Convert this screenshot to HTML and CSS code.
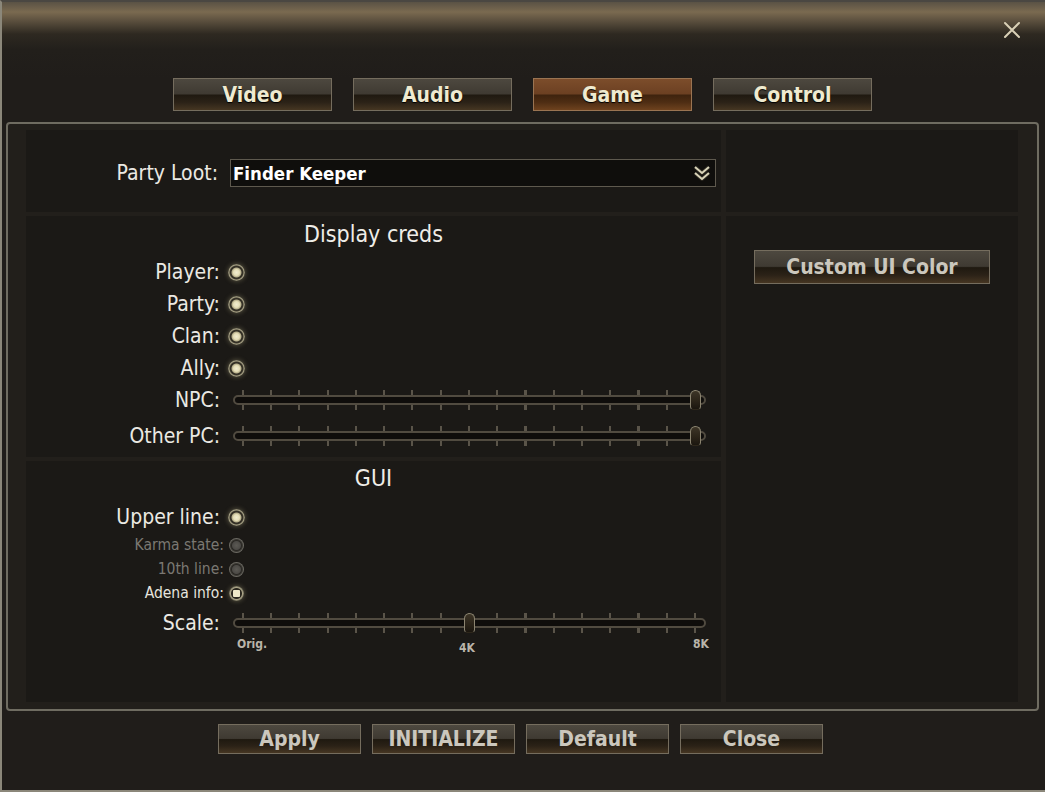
FILE: index.html
```html
<!DOCTYPE html>
<html lang="en">
<head>
    <meta charset="UTF-8">
    <title>Options - Game</title>
    <link rel="stylesheet" href="styles.css">
</head>
<body>
    <div class="window">
        <div class="title-bar">
            <button class="close-btn" aria-label="Close">
                <svg width="18" height="18" viewBox="0 0 18 18"><path d="M2 2 L16 16 M16 2 L2 16" stroke="#d9d0b6" stroke-width="2" stroke-linecap="round"/></svg>
            </button>
        </div>

        <div class="tabs">
            <div class="btn tab">Video</div>
            <div class="btn tab">Audio</div>
            <div class="btn tab active">Game</div>
            <div class="btn tab">Control</div>
        </div>

        <div class="panel">
            <div class="cell loot-cell">
                <span class="label loot-label">Party Loot:</span>
                <div class="dropdown">
                    <span>Finder Keeper</span>
                    <svg class="chevron" width="18" height="18" viewBox="0 0 18 18">
                        <path d="M2 3 L9 9 L16 3 M2 9 L9 15 L16 9" fill="none" stroke="#2a2720" stroke-width="4" stroke-linejoin="round"/>
                        <path d="M2 3 L9 9 L16 3 M2 9 L9 15 L16 9" fill="none" stroke="#d8d3b8" stroke-width="2" stroke-linejoin="round"/>
                    </svg>
                </div>
            </div>
            <div class="cell"></div>

            <div class="cell creds-cell">
                <div class="section-title">Display creds</div>
                <div class="row"><span class="label">Player:</span><span class="radio"></span></div>
                <div class="row"><span class="label">Party:</span><span class="radio"></span></div>
                <div class="row"><span class="label">Clan:</span><span class="radio"></span></div>
                <div class="row"><span class="label">Ally:</span><span class="radio"></span></div>
                <div class="row"><span class="label">NPC:</span>
                    <div class="slider"><div class="ticks"></div><div class="track"></div><div class="thumb" style="left: 457px"></div></div>
                </div>
                <div class="row row-gap"><span class="label">Other PC:</span>
                    <div class="slider"><div class="ticks"></div><div class="track"></div><div class="thumb" style="left: 457px"></div></div>
                </div>
            </div>

            <div class="cell side-cell">
                <div class="btn wide-btn">Custom UI Color</div>
            </div>

            <div class="cell gui-cell">
                <div class="section-title gui-title">GUI</div>
                <div class="row"><span class="label">Upper line:</span><span class="radio"></span></div>
                <div class="row small"><span class="label dim">Karma state:</span><span class="radio off"></span></div>
                <div class="row small"><span class="label dim">10th line:</span><span class="radio off"></span></div>
                <div class="row small"><span class="label">Adena info:</span><span class="radio square"></span></div>
                <div class="row scale-row"><span class="label">Scale:</span>
                    <div class="slider"><div class="ticks"></div><div class="track"></div><div class="thumb" style="left: 231px"></div></div>
                </div>
                <div class="scale-marks">
                    <span>Orig.</span>
                    <span class="mid">4K</span>
                    <span class="end">8K</span>
                </div>
            </div>
        </div>

        <div class="footer">
            <div class="btn foot-btn">Apply</div>
            <div class="btn foot-btn">INITIALIZE</div>
            <div class="btn foot-btn">Default</div>
            <div class="btn foot-btn">Close</div>
        </div>
    </div>
</body>
</html>
```

FILE: styles.css
```css
* { margin: 0; padding: 0; box-sizing: border-box; }

body {
    background: #1f1c19;
    font-family: 'DejaVu Sans Condensed', 'DejaVu Sans', sans-serif;
    color: #e8e6e0;
}

.window {
    width: 1045px;
    height: 792px;
    background: #201d1a;
    border-left: 2px solid #8b877a;
    border-bottom: 2px solid #8b877a;
    border-top: 2px solid #4a4742;
    position: relative;
}

/* top strip */
.title-bar {
    height: 76px;
    background: linear-gradient(180deg, #5a5245 0px, #7a6a50 10px, #5e5240 18px, #2e2921 32px, #221f1b 48px, #201d1a 76px);
    position: relative;
}

.close-btn {
    position: absolute;
    right: 24px;
    top: 19px;
    background: none;
    border: none;
    width: 18px;
    height: 18px;
}

.tabs {
    display: flex;
    justify-content: center;
    gap: 21px;
    margin-left: -2px;
}

.btn {
    display: flex;
    align-items: center;
    justify-content: center;
    border: 1px solid #756d5e;
    background: linear-gradient(180deg, #4d483f 0%, #3f3a32 48%, #1f1910 52%, #2b2217 75%, #463622 100%);
    font-weight: bold;
    font-size: 21px;
    color: #cbc7bd;
}

.tab {
    width: 159px;
    height: 33px;
    color: #efead0;
    text-shadow: 0 1px 1px #000;
}

.tab.active {
    background: linear-gradient(180deg, #7c4d2b 0%, #6c4022 48%, #3e230e 52%, #4e2d13 75%, #6e421e 100%);
    border-color: #9a7452;
}

.panel {
    margin: 11px 0 0 4px;
    width: 1033px;
    height: 589px;
    border: 2px solid #6f6c61;
    border-radius: 4px;
    background: #221f1b;
    padding: 6px 18px;
    display: grid;
    grid-template-columns: 695px 292px;
    grid-template-rows: 82px 241px 241px;
    gap: 4px 5px;
}

.cell {
    background: #1b1916;
}

.side-cell {
    grid-column: 2;
    grid-row: 2 / 4;
    padding: 34px 0 0 28px;
}

.wide-btn {
    width: 236px;
    height: 34px;
}

.label {
    width: 194px;
    text-align: right;
    font-size: 21px;
    color: #ebe9e3;
    flex-shrink: 0;
}

.loot-cell {
    display: flex;
    align-items: center;
    padding-top: 4px;
}

.loot-label {
    width: 192px;
    margin-right: 12px;
}

.dropdown {
    width: 486px;
    height: 28px;
    border: 1px solid #5e594e;
    background: #0f0e0c;
    display: flex;
    align-items: center;
    justify-content: space-between;
    padding: 0 4px 0 2px;
    font-weight: bold;
    font-size: 18.5px;
    color: #ffffff;
}

.section-title {
    text-align: center;
    font-size: 23px;
    line-height: 36px;
    height: 40px;
    color: #efede8;
}

.gui-title {
    line-height: 34px;
    height: 40px;
}

.row {
    display: flex;
    align-items: center;
    height: 32px;
}

.row-gap {
    margin-top: 4px;
}

.row.small {
    height: 24px;
}

.row.small .label {
    font-size: 15.5px;
    width: 198px;
    color: #e6e4de;
}

.row.small .label.dim {
    color: #7a7872;
}

.radio {
    width: 17px;
    height: 17px;
    margin-left: 8px;
    border-radius: 50%;
    background: radial-gradient(circle, #f1ecd0 0, #e4ddb6 3px, #b3ab88 4.5px, #2b281f 5.5px, #3b372c 6.5px, #a9a386 7.5px, #6d6957 8.5px);
    box-shadow: 0 0 5px rgba(225, 215, 160, 0.35);
}

.row.small .radio {
    width: 15px;
    height: 15px;
    margin-left: 5px;
}

.radio.off {
    background: radial-gradient(circle, #5b5954 0, #4c4a46 4px, #2a2824 5px, #3a3833 6px, #6b6962 7px);
    box-shadow: none;
}

.radio.square {
    background: radial-gradient(circle, #2b281f 0, #2b281f 5px, #aaa487 6px, #6d6957 7.5px);
    position: relative;
}

.radio.square::after {
    content: "";
    position: absolute;
    left: 4px;
    top: 4px;
    width: 7px;
    height: 7px;
    border-radius: 1px;
    background: #eee8c8;
}

/* sliders */
.slider {
    position: relative;
    width: 473px;
    height: 20px;
    margin-left: 13px;
}

.ticks {
    position: absolute;
    left: 9px;
    right: 0;
    top: 0;
    bottom: 0;
    background: repeating-linear-gradient(90deg, #5a5449 0, #5a5449 2px, transparent 2px, transparent 28.25px);
}

.track {
    position: absolute;
    left: 0;
    right: 0;
    top: 5px;
    height: 10px;
    border: 2px solid #514b40;
    border-radius: 5px;
    background: #0f0d0b;
}

.thumb {
    position: absolute;
    top: 0;
    width: 11px;
    height: 20px;
    border-radius: 6px 6px 4px 4px;
    border: 1px solid #8b8470;
    border-bottom-color: #2e271b;
    background: linear-gradient(180deg, #3d3527 0%, #2a2318 60%, #1b160f 100%);
}

.scale-row {
    margin-top: 2px;
}

.scale-marks {
    display: grid;
    grid-template-columns: 1fr auto 1fr;
    align-items: start;
    width: 472px;
    margin-left: 211px;
    margin-top: -2px;
    font-size: 12px;
    font-weight: bold;
    color: #bab5aa;
}

.scale-marks .mid {
    margin-top: 4px;
    margin-right: 12px;
}

.scale-marks .end {
    text-align: right;
}

.footer {
    display: flex;
    justify-content: center;
    gap: 11px;
    margin-top: 13px;
    margin-left: -6px;
}

.foot-btn {
    width: 143px;
    height: 30px;
}
```
